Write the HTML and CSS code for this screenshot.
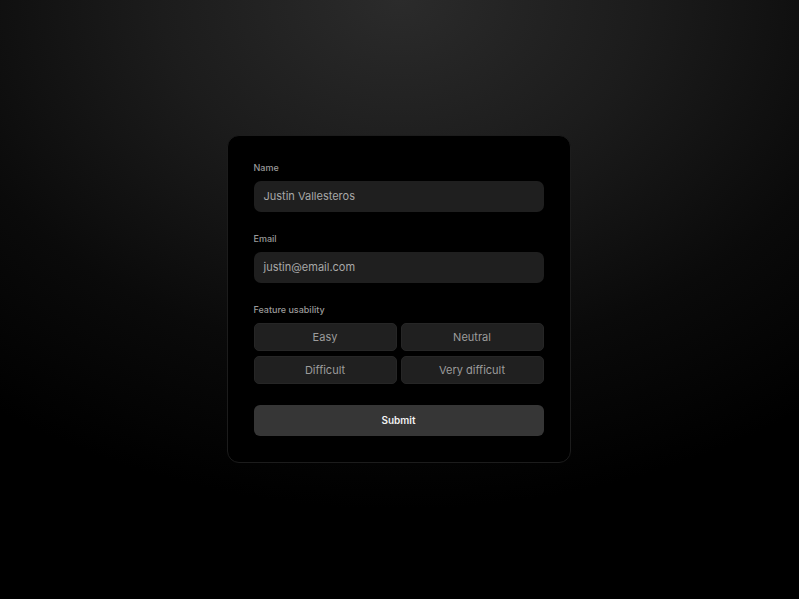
FILE: index.html
```html
<!DOCTYPE html>
<html lang="en">
<head>
<meta charset="utf-8">
<title>Feedback form</title>
<link rel="stylesheet" href="styles.css">
</head>
<body>
<main class="page">
  <form class="card">
    <div class="field">
      <label class="label">Name</label>
      <div class="input">Justin Vallesteros</div>
    </div>
    <div class="field">
      <label class="label">Email</label>
      <div class="input">justin@email.com</div>
    </div>
    <div class="field">
      <label class="label">Feature usability</label>
      <div class="options">
        <div class="option">Easy</div>
        <div class="option">Neutral</div>
        <div class="option">Difficult</div>
        <div class="option">Very difficult</div>
      </div>
    </div>
    <div class="submit">Submit</div>
  </form>
</main>
</body>
</html>
```
FILE: styles.css
```css
* { box-sizing: border-box; }
html, body { margin: 0; padding: 0; height: 100%; }
body {
  background: #000;
  font-family: Inter, "Noto Sans", sans-serif;
}
.page {
  height: 100vh;
  display: flex;
  align-items: center;
  justify-content: center;
  padding: 0 2px 2px 0;
  background: radial-gradient(ellipse 85% 85% at 50% 0%, #2b2b2b 0%, #1c1c1c 35%, #0a0a0a 70%, #000 100%);
}
.card {
  width: 344px;
  margin: 0;
  padding: 26px 26px;
  background: #000;
  border: 1px solid #1c1c1c;
  border-radius: 12px;
  display: flex;
  flex-direction: column;
}
.field {
  display: flex;
  flex-direction: column;
  margin-bottom: 21px;
  flex-shrink: 0;
}
.label {
  font-size: 9px;
  line-height: 12px;
  color: #9a9a9a;
  margin-bottom: 7px;
  font-weight: 500;
}
.input {
  height: 31px;
  border-radius: 7px;
  background: #1f1f1f;
  color: #a8a8a8;
  font-size: 11px;
  line-height: 31px;
  padding-left: 10px;
}
.options {
  display: grid;
  grid-template-columns: 1fr 1fr;
  column-gap: 4px;
  row-gap: 5px;
}
.option {
  height: 28px;
  border-radius: 5px;
  background: #202020;
  border: 1px solid #262626;
  color: #9c9c9c;
  font-size: 11px;
  display: flex;
  align-items: center;
  justify-content: center;
}
.submit {
  height: 31px;
  flex-shrink: 0;
  border-radius: 6px;
  background: #363636;
  color: #f2f2f2;
  font-size: 10px;
  font-weight: 600;
  display: flex;
  align-items: center;
  justify-content: center;
}
```
